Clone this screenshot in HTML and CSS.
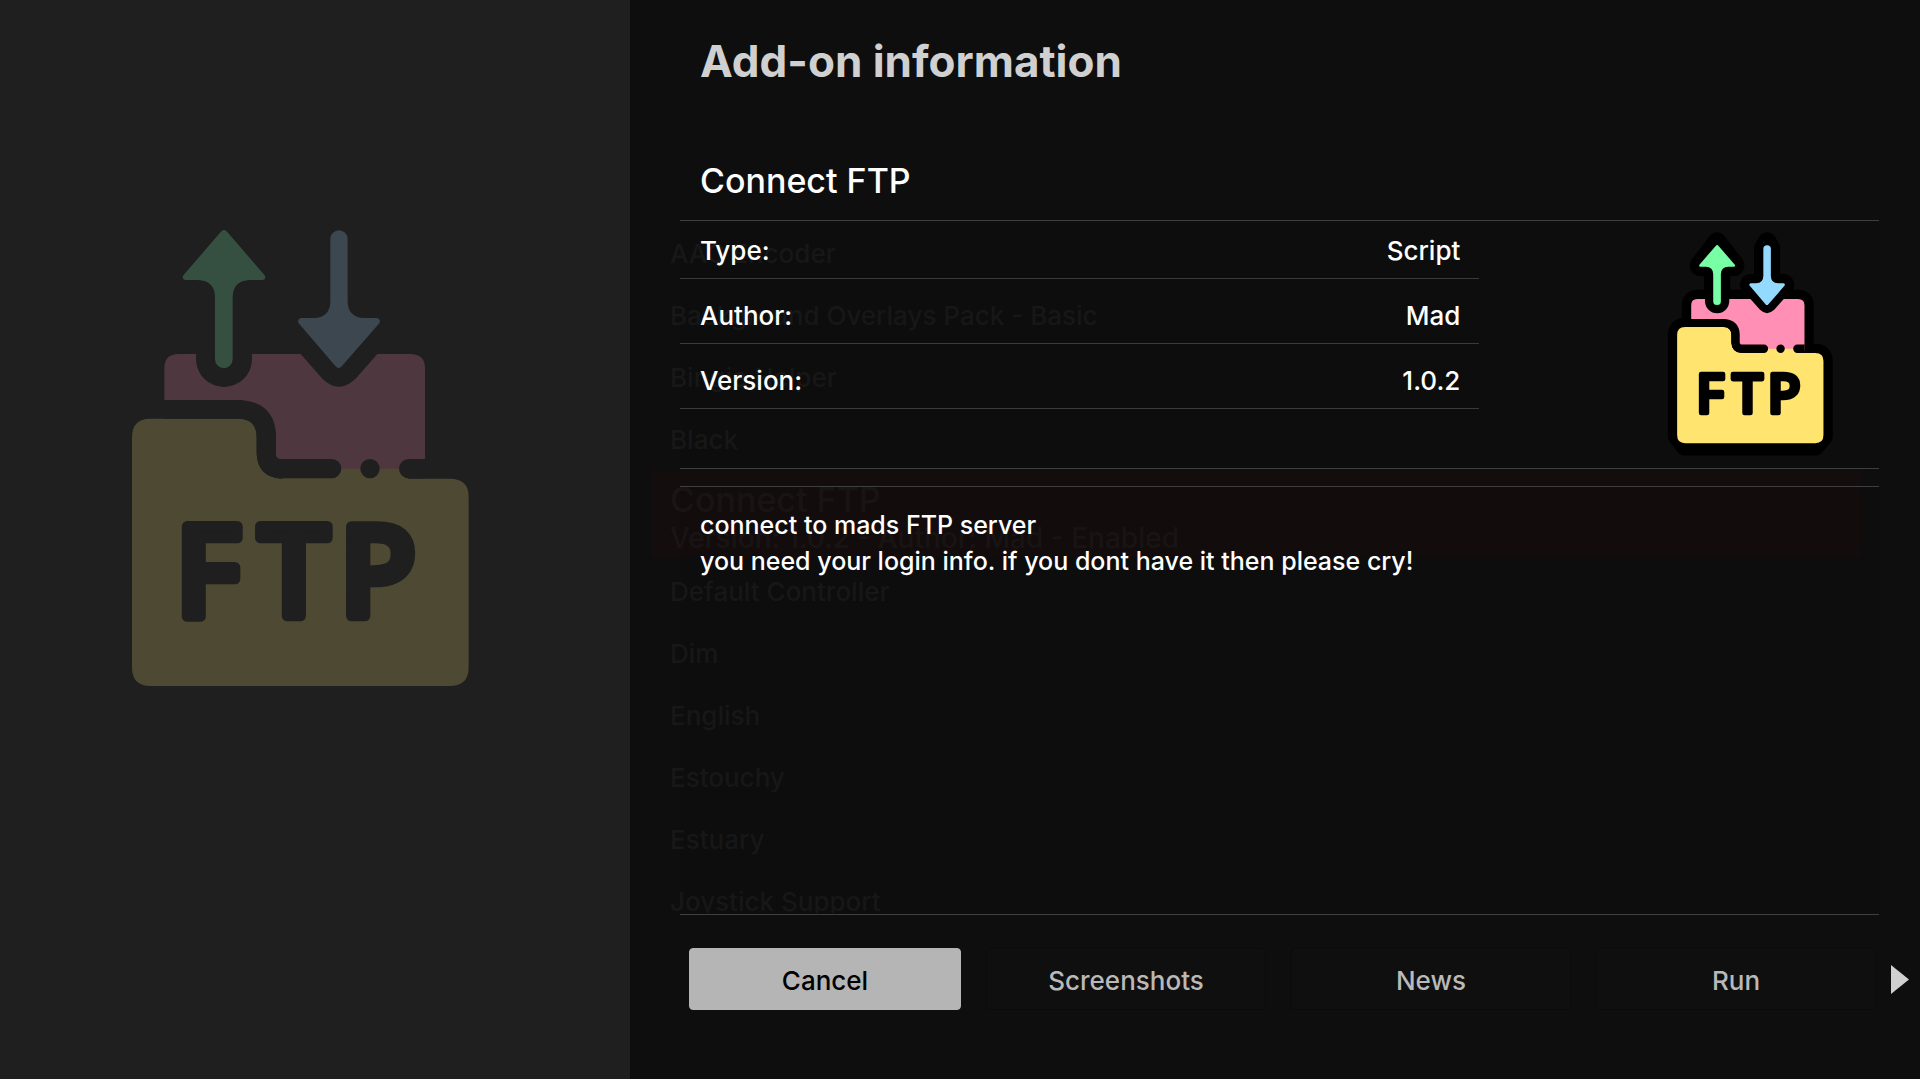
FILE: index.html
```html
<!DOCTYPE html>
<html lang="en">
<head>
<meta charset="utf-8">
<meta name="viewport" content="width=device-width, initial-scale=1">
<title>Add-on information</title>
<link rel="stylesheet" href="styles.css">
</head>
<body>
<svg class="defs" aria-hidden="true">
  <symbol id="ftp-icon" viewBox="0 0 1260 1560" overflow="visible">
    <g class="outline">
      <path d="M372 66L494 226Q500 238 486 240H450Q398 242 398 292V478A26 26 0 0 1 345 478V292Q345 242 293 240H258Q243 238 250 226Z"/>
      <path d="M691 112L717 66L743 112V302Q743 352 792 354H830Q844 358 838 370L726 498Q716 510 706 498L596 370Q590 358 604 354H642Q691 352 691 302Z"/>
      <path d="M193 505Q193 462 236 462H930Q975 462 975 505V836H1050Q1106 836 1106 890V1410L1050 1478H150L96 1410V712Q96 656 150 656H193Z"/>
    </g>
    <path class="paper" d="M193 610V505Q193 462 236 462H288V477A84 84 0 0 0 456 477V462H602L668 537Q716 583 766 537L832 462H930Q975 462 975 505V820H500V700L440 610Z"/>
    <path class="folder" d="M96 712Q96 656 150 656H418Q470 658 470 712V762Q474 830 540 836L722 806H900L926 836H1050Q1106 836 1106 890V1402Q1106 1458 1050 1458H150Q96 1458 96 1402Z"/>
    <path class="ink" d="M190 600H424Q524 608 528 705V764Q530 777 542 777H695A29 29 0 0 1 695 835H540Q474 830 470 762V712Q470 658 418 656H190Z"/>
    <path class="ink" d="M976 777H926A29 29 0 0 0 926 835H976Z"/>
    <circle class="ink" cx="810" cy="806" r="29"/>
    <path class="up" d="M362 96Q372 84 382 96L494 226Q500 238 486 240H450Q398 242 398 292V478A26 26 0 0 1 345 478V292Q345 242 293 240H258Q243 238 250 226Z"/>
    <path class="down" d="M691 117A26 26 0 0 1 743 117V302Q743 352 792 354H830Q844 358 838 370L726 498Q716 510 706 498L596 370Q590 358 604 354H642Q691 352 691 302Z"/>
    <text class="letters" x="226 476 719" y="1249">FTP</text>
  </symbol>
</svg>

<div class="screen">
  <aside class="poster">
    <svg class="poster-icon" viewBox="0 0 1260 1560" role="img" aria-label="Connect FTP"><use href="#ftp-icon"/></svg>
  </aside>

  <div class="stage">
    <ul class="backdrop" aria-hidden="true">
      <li>AAC Encoder</li>
      <li>Background Overlays Pack - Basic</li>
      <li>Bingie Helper</li>
      <li>Black</li>
      <li class="current"><span class="name">Connect FTP</span><span>Version: 1.0.2 - Author: Mad - Enabled</span></li>
      <li>Default Controller</li>
      <li>Dim</li>
      <li>English</li>
      <li>Estouchy</li>
      <li>Estuary</li>
      <li class="last">Joystick Support</li>
    </ul>

    <main class="dialog">
      <h1>Add-on information</h1>
      <h2>Connect FTP</h2>
      <section class="info">
        <dl>
          <div><dt>Type:</dt><dd>Script</dd></div>
          <div><dt>Author:</dt><dd>Mad</dd></div>
          <div><dt>Version:</dt><dd>1.0.2</dd></div>
        </dl>
        <svg class="thumb" viewBox="0 0 1260 1560" role="img" aria-label="Connect FTP"><use href="#ftp-icon"/></svg>
      </section>
      <section class="description">
        <p>connect to mads FTP server<br>you need your login info. if you dont have it then please cry!</p>
      </section>
      <footer class="actions">
        <div class="buttons">
          <button type="button" class="focused">Cancel</button>
          <button type="button">Screenshots</button>
          <button type="button">News</button>
          <button type="button">Run</button>
        </div>
        <button type="button" class="more" aria-label="More actions">
          <svg viewBox="0 0 18 29"><path d="M0 0L18 14.5L0 29Z"/></svg>
        </button>
      </footer>
    </main>
  </div>
</div>
</body>
</html>
```
FILE: styles.css
```css
* { box-sizing: border-box; }

body {
  margin: 0;
  background: #0e0e0e;
  color: #fff;
  font: 500 25px/36px Inter, "Liberation Sans", sans-serif;
}

h1, h2, p, dl, dd, ul { margin: 0; padding: 0; }

.defs { position: absolute; width: 0; height: 0; }

.screen {
  display: grid;
  grid-template-columns: 630fr 1290fr;
  min-height: 100vh;
}

/* Left column */
.poster {
  padding: 200px 110px 0 100px;
  background: #1f1f1f;
  --outline: #1f1f1f;
  --yellow: #4e4932;
  --pink: #4e373f;
  --green: #354f40;
  --blue: #3c474f;
}
.poster-icon { display: block; width: 100%; }

.outline {
  fill: var(--outline);
  stroke: var(--outline);
  stroke-width: 128;
  stroke-linejoin: round;
}
.ink { fill: var(--outline); }
.folder { fill: var(--yellow); }
.paper { fill: var(--pink); }
.up { fill: var(--green); }
.down { fill: var(--blue); }
.letters {
  fill: var(--outline);
  stroke: var(--outline);
  stroke-width: 32;
  stroke-linejoin: round;
  font: 500 375px "Noto Sans", "Open Sans", sans-serif;
}

/* The list behind the dialog shares its grid cell */
.stage { display: grid; min-width: 0; }
.backdrop, .dialog { grid-area: 1 / 1; min-width: 0; }

.backdrop {
  padding: 223px 59px 0 21px;
  list-style: none;
  color: #181818;
  font-size: 26px;
}
.backdrop li { height: 62px; padding-left: 19px; line-height: 62px; }
.backdrop .current {
  display: flex;
  flex-direction: column;
  height: 86px;
  margin-bottom: 4px;
  padding-top: 9px;
  background: #140d0d;
  color: #1b1515;
  font-size: 28px;
  line-height: 39px;
}
.backdrop .name { font-size: 34px; }
.backdrop .last { height: 42px; overflow: hidden; }

.dialog {
  z-index: 1;
  display: flex;
  flex-direction: column;
  padding: 32px 11px 0 50px;
}
h1 {
  padding-left: 20px;
  color: #d0d0d0;
  font-size: 44px;
  font-weight: 700;
  line-height: 58px;
}
h2 {
  margin: 70px 30px 0 0;
  padding: 0 20px 18px;
  border-bottom: 1px solid #3f3f3f;
  font-size: 34px;
  font-weight: 500;
  line-height: 42px;
}

.info {
  display: grid;
  grid-template-columns: 2fr 1fr;
  height: 248px;
  margin-right: 30px;
  background: rgba(0, 0, 0, .04);
  border-bottom: 1px solid #3f3f3f;
}
.info dl { font-size: 26px; }
.info dl div {
  display: flex;
  justify-content: space-between;
  align-items: end;
  height: 65px;
  padding: 0 19px 9px 20px;
  border-bottom: 1px solid #3a3a3a;
}
.info dl div:first-child { height: 58px; }

.thumb {
  justify-self: end;
  width: 183px;
  height: 226px;
  margin: 11px 33px 0 0;
  --outline: #000;
  --yellow: #ffe470;
  --pink: #ff8fb4;
  --green: #78ffa5;
  --blue: #94dafe;
}

.description {
  height: 429px;
  margin: 17px 30px 0 0;
  padding: 20px;
  border-top: 1px solid #3f3f3f;
  border-bottom: 1px solid #3f3f3f;
  background: rgba(0, 0, 0, .04);
}

.actions {
  display: flex;
  gap: 15px;
  align-items: center;
  padding: 33px 0 48px 9px;
}
.buttons {
  display: grid;
  flex: 1;
  grid-template-columns: 272fr 280fr 280fr 280fr;
  column-gap: 25px;
}
.buttons button {
  height: 62px;
  padding: 3px 0 0;
  border: 1px solid #0b0b0b;
  border-radius: 4px;
  background: #0f0f0f;
  color: #b9b9b9;
  font: inherit;
  font-size: 26px;
}
.buttons .focused {
  border-color: #b5b5b5;
  background: #b5b5b5;
  color: #000;
}
.more {
  padding: 0;
  border: 0;
  background: none;
}
.more svg { display: block; width: 18px; height: 29px; fill: #d0d0d0; }
```
